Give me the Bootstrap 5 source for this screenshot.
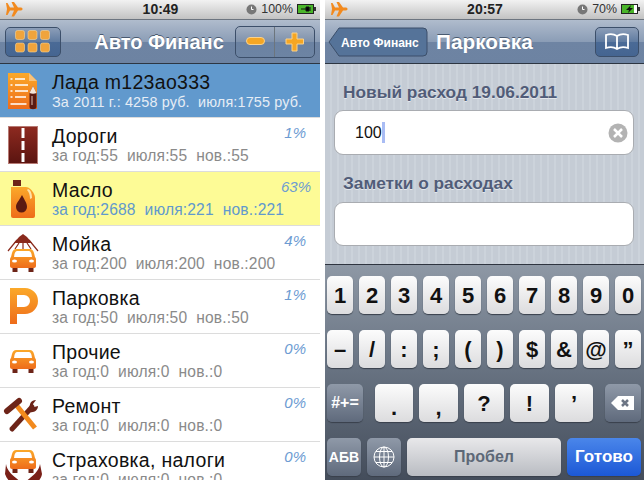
<!DOCTYPE html>
<html lang="ru">
<head>
<meta charset="UTF-8">
<title>Авто Финанс</title>
<link href="https://cdn.jsdelivr.net/npm/bootstrap@5.3.3/dist/css/bootstrap.min.css" rel="stylesheet">
<style>
  html, body { margin: 0; width: 644px; height: 480px; overflow: hidden; background: #fff; }
  body { font-family: "Liberation Sans", Arial, sans-serif; }
  .shots { width: 644px; height: 480px; }
  .phone { height: 480px; overflow: hidden; }
  .phone-left { width: 320px; margin-right: 5px; }
  .phone-right { width: 319px; background: repeating-linear-gradient(90deg, #c5ccd5 0, #c5ccd5 5px, #ccd3db 5px, #ccd3db 7px); }
  .statusbar { height: 20px; background: linear-gradient(#f2f2f2, #c2c2c2); border-bottom: 1px solid #6d7580; color: #222; padding: 0 4px 0 5px; }
  .sb-side { width: 100px; }
  .sb-time { font-weight: 700; font-size: 14px; }
  .sb-right { font-size: 12.4px; color: #333; }
  .navtop { height: 44px; background: linear-gradient(#b0bccd 0, #8b9db6 50%, #6e84a3 51%, #6d83a2 100%); border-bottom: 1px solid #2d3642; padding: 0 5px; }
  .nav-title { color: #fff; font-weight: 700; font-size: 20px; text-shadow: 0 -1px 0 #4a5a70; }
  .nav-title-main { margin-left: 22px; }
  .nav-title-sub { font-size: 20.8px; }
  .barbtn { background: linear-gradient(#8c9eb8, #5f7ba0 50%, #4a6a96 51%, #456591); border: 1px solid #3c4f6a; border-radius: 5px; height: 30px; }
  .barbtn-flat { background: linear-gradient(#a1aec1, #7e91ab 50%, #6b82a2 51%, #6d84a3); }
  .row-item { height: 54px; border-bottom: 1px solid #dcdcdc; padding-left: 8px; background: #fff; }
  .row-sel { background: #6199cd; }
  .row-hot { background: #fdfb96; }
  .row-ico { width: 30px; height: 38px; flex: none; margin-right: 14px; overflow: visible; }
  .row-name { font-size: 19.5px; line-height: 20px; color: #111; letter-spacing: .3px; margin-top: 1px; }
  .row-sub { font-size: 15.6px; line-height: 16px; color: #8a8a8a; margin-top: 2px; white-space: pre; letter-spacing: .15px; }
  .row-sel .row-sub { color: #e6edf5; font-size: 14.4px; }
  .row-hot .row-sub { color: #6199cd; }
  .row-pct { position: absolute; right: 14px; top: 5px; line-height: 20px; font-style: italic; font-size: 15px; color: #6c9bd2; }
  .row-hot .row-pct { right: 9px; }
  .fld-label { font-weight: 700; font-size: 17.3px; color: #515c78; text-shadow: 0 1px 0 #e3e7ec; padding-left: 18px; line-height: 18px; }
  .fld-box { background: #fff; border: 1px solid #a9acb1; border-radius: 9px; margin: 0 10px 0 9px; position: relative; }
  .fld-value { font-size: 16px; color: #111; }
  .fld-clear { position: absolute; right: 5px; top: 12px; }
  .caret-bar { display: inline-block; width: 3px; height: 21px; background: #a9bcf4; }
  .kbd-wrap { height: 216px; margin-top: 18px; background: linear-gradient(#8e98a5, #6a7584 45%, #444d5b); border-top: 1px solid #2f3540; padding: 11px 0 0 2px; }
  .key { width: 26px; height: 38px; margin-right: 6px; background: linear-gradient(#fcfcfc, #dcdcde); border-radius: 5px; box-shadow: 0 1px 1px #39404b; font-weight: 700; font-size: 22px; color: #111; flex: none; }
  .key-dark { background: linear-gradient(#8f99a8, #5f6a7c); color: #fff; font-size: 14px; }
  .key-sym { font-size: 16px; }
  .key-low { padding-top: 8px; }
  .key-space { background: linear-gradient(#e8e8ea, #b9bcc2); color: #5d6877; font-size: 16px; }
  .key-go { background: linear-gradient(#4a86ea, #1c58d6); color: #fff; font-size: 17px; }
  .kb-row { height: 54px; }
</style>
</head>
<body>
<svg width="0" height="0" class="position-absolute">
  <defs>
    <linearGradient id="org" x1="0" y1="0" x2="0" y2="1"><stop offset="0" stop-color="#fba92a"/><stop offset="1" stop-color="#ee6c1a"/></linearGradient>
    <linearGradient id="rd" x1="0" y1="0" x2="0" y2="1"><stop offset="0" stop-color="#8e2a20"/><stop offset="1" stop-color="#5a1410"/></linearGradient>
    <symbol id="car" viewBox="0 0 26 23" overflow="visible">
      <rect x="2.500" y="18" width="5" height="5" fill="#6d2418"/><rect x="18.500" y="18" width="5" height="5" fill="#6d2418"/>
      <path d="M6 0h14c2 0 3 1 4 4l1 4c1 1 1 2 1 3v6c0 1-1 2-2 2H2c-1 0-2-1-2-2v-6c0-1 0-2 1-3l1-4c1-3 2-4 4-4z" fill="url(#org)"/>
      <path d="M7 2h12c1 0 2 1 2.500 3l.5 3H4l.5-3C5 3 6 2 7 2z" fill="#fff"/>
      <ellipse cx="4.500" cy="12" rx="2.500" ry="1.500" fill="#fff"/><ellipse cx="21.500" cy="12" rx="2.500" ry="1.500" fill="#fff"/>
    </symbol>
  </defs>
</svg>
<div class="shots d-flex">
  <!-- left phone: list of categories -->
  <div class="phone phone-left">
    <div class="statusbar d-flex align-items-center justify-content-between">
      <div class="sb-side">
        <svg class="d-block" width="18" height="15" viewBox="0 0 18 15"><path d="M1 1h1.500l2.500 4.500h4L6.500 0h2.500l4 5.500h3c2 0 2 3 0 3h-3l-4 6H6.500L9 8.500H5l-2.500 4.500H1l1-6z" fill="#f28a1e"/></svg>
      </div>
      <span class="sb-time">10:49</span>
      <span class="sb-side sb-right d-flex align-items-center justify-content-end gap-1">
        <svg width="11" height="11" viewBox="0 0 11 11"><circle cx="5.500" cy="5.500" r="5" fill="#777"/><path d="M5.500 2.500v3h2" stroke="#fff" fill="none"/></svg>
        100%
        <svg width="19" height="10" viewBox="0 0 19 10"><rect x=".5" y=".5" width="16" height="9" fill="#4ab52a" stroke="#222"/><rect x="17" y="3" width="2" height="4" fill="#333"/><path d="M4 5h5M9 3h3v4H9zM12 4h2M12 6h2" stroke="#111"/></svg>
      </span>
    </div>
    <div class="navtop d-flex align-items-center justify-content-between">
      <div class="barbtn d-flex align-items-center justify-content-center" style="width:56px">
        <svg width="36" height="23" viewBox="0 0 36 23"><g fill="#f0a43c" stroke="#f9d79a" stroke-width=".6"><rect x=".5" y=".5" width="9" height="9" rx="2"/><rect x="13" y=".5" width="9" height="9" rx="2"/><rect x="25.500" y=".5" width="9" height="9" rx="2"/><rect x=".5" y="13" width="9" height="9" rx="2"/><rect x="13" y="13" width="9" height="9" rx="2"/><rect x="25.500" y="13" width="9" height="9" rx="2"/></g></svg>
      </div>
      <span class="nav-title nav-title-main">Авто Финанс</span>
      <div class="barbtn barbtn-flat d-flex" style="width:80px;height:32px">
        <div class="flex-fill d-flex align-items-center justify-content-center border-end border-secondary">
          <svg width="19" height="9" viewBox="0 0 19 9"><rect x=".5" y=".5" width="18" height="7" rx="3.500" fill="#f5a623" stroke="#fbd28a"/></svg>
        </div>
        <div class="flex-fill d-flex align-items-center justify-content-center">
          <svg width="20" height="20" viewBox="0 0 20 20"><path d="M7 1h5v6h6.500v5H12v7H7v-7H1V7h6z" fill="#f5a623" stroke="#fbd28a" stroke-linejoin="round"/></svg>
        </div>
      </div>
    </div>

    <div class="row-item row-sel d-flex align-items-center position-relative">
      <svg class="row-ico" viewBox="0 0 30 38"><path d="M0 1h21l8 8v28H0z" fill="url(#org)"/><path d="M21 1l8 8h-8z" fill="#f9c27a"/><g stroke="#fff" stroke-width="1.500"><path d="M2.500 7h2M7 7h10M2.500 13h2M7 13h13M2.500 19h2M7 19h13M2.500 25h2M7 25h11M2.500 32h16"/></g><path d="M21.500 21l3.500-7 3.500 7v14c0 3-7 3-7 0z" fill="#5a1a12"/><path d="M21.500 21l3.500-7 3.500 7c-2 1-5 1-7 0z" fill="#f6e6d8"/><path d="M24 24v9" stroke="#b58a7e" stroke-width="1.500"/></svg>
      <div><div class="row-name">Лада m123ao333</div><div class="row-sub">За 2011 г.: 4258 руб.  июля:1755 руб.</div></div>
    </div>
    <div class="row-item d-flex align-items-center position-relative">
      <svg class="row-ico" viewBox="0 0 30 38"><rect x=".5" y=".5" width="29" height="37" fill="url(#rd)" stroke="#b77a74"/><path d="M15 2v10M15 15v9M15 27v9" stroke="#fff" stroke-width="3"/></svg>
      <div><div class="row-name">Дороги</div><div class="row-sub">за год:55  июля:55  нов.:55</div></div>
      <span class="row-pct">1%</span>
    </div>
    <div class="row-item row-hot d-flex align-items-center position-relative">
      <svg class="row-ico" viewBox="0 0 30 38"><rect x="5" y="0" width="8" height="6" fill="#6d2418"/><path d="M3 7h15c3 0 6 3 8 7 1 2 1 3 1 5v17a2 2 0 0 1-2 2H5a2 2 0 0 1-2-2z" fill="url(#org)"/><path d="M14 15c3 6 5 8 5 12a5.500 5.500 0 0 1-11 0c0-4 3-6 6-12z" fill="#5a1a12"/><path d="M20 9c3 1 4 5 4 9l-2 1c0-4-1-7-3-9z" fill="#fde2a8"/></svg>
      <div><div class="row-name">Масло</div><div class="row-sub">за год:2688  июля:221  нов.:221</div></div>
      <span class="row-pct">63%</span>
    </div>
    <div class="row-item d-flex align-items-center position-relative">
      <svg class="row-ico" viewBox="0 0 30 38"><path d="M15 0l4 3 5 6H6l5-6z" fill="#8a2a1c"/><g stroke="#8a2a1c" stroke-width="1.200"><path d="M9 6L0 17M11 9l-4 6M15 9v6M19 9l4 6M21 6l9 11"/></g><svg x="2" y="15" width="26" height="23" viewBox="0 0 26 23"><use href="#car"/></svg></svg>
      <div><div class="row-name">Мойка</div><div class="row-sub">за год:200  июля:200  нов.:200</div></div>
      <span class="row-pct">4%</span>
    </div>
    <div class="row-item d-flex align-items-center position-relative">
      <svg class="row-ico" viewBox="0 0 30 38"><path d="M2 0H17a13 13 0 0 1 0 26H9v10H2zM9 7v12h7a6 6 0 0 0 0-12z" fill="url(#org)" fill-rule="evenodd"/></svg>
      <div><div class="row-name">Парковка</div><div class="row-sub">за год:50  июля:50  нов.:50</div></div>
      <span class="row-pct">1%</span>
    </div>
    <div class="row-item d-flex align-items-center position-relative">
      <svg class="row-ico" viewBox="0 0 30 38"><svg x="2" y="8" width="26" height="23" viewBox="0 0 26 23"><use href="#car"/></svg></svg>
      <div><div class="row-name">Прочие</div><div class="row-sub">за год:0  июля:0  нов.:0</div></div>
      <span class="row-pct">0%</span>
    </div>
    <div class="row-item d-flex align-items-center position-relative">
      <svg class="row-ico" viewBox="0 0 30 38"><path d="M4 33L24 11" stroke="#6d2418" stroke-width="5" stroke-linecap="round"/><path d="M22 12c-1-4 1-8 6-8l-3 4 1 3 4-1c0 4-4 7-8 6z" fill="#6d2418"/><path d="M9 10l18 22" stroke="#f28a1e" stroke-width="5"/><path d="M-1 15L11 5" stroke="#6d2418" stroke-width="6" stroke-linecap="round"/></svg>
      <div><div class="row-name">Ремонт</div><div class="row-sub">за год:0  июля:0  нов.:0</div></div>
      <span class="row-pct">0%</span>
    </div>
    <div class="row-item d-flex align-items-center position-relative">
      <svg class="row-ico" viewBox="0 0 30 38"><svg x="2" y="0" width="26" height="23" viewBox="0 0 26 23"><use href="#car"/></svg><path d="M-2 14c1 6 5 10 10 14l7 6 7-6c5-4 9-8 10-14l2 10c-1 6-6 10-11 14H9C4 34-1 30-3 24z" fill="#7a2018"/></svg>
      <div><div class="row-name">Страховка, налоги</div><div class="row-sub">за год:0  июля:0  нов.:0</div></div>
      <span class="row-pct">0%</span>
    </div>
  </div>

  <!-- right phone: new expense -->
  <div class="phone phone-right">
    <div class="statusbar d-flex align-items-center justify-content-between">
      <div class="sb-side">
        <svg class="d-block" width="18" height="15" viewBox="0 0 18 15"><path d="M1 1h1.500l2.500 4.500h4L6.500 0h2.500l4 5.500h3c2 0 2 3 0 3h-3l-4 6H6.500L9 8.500H5l-2.500 4.500H1l1-6z" fill="#f28a1e"/></svg>
      </div>
      <span class="sb-time">20:57</span>
      <span class="sb-side sb-right d-flex align-items-center justify-content-end gap-1">
        <svg width="11" height="11" viewBox="0 0 11 11"><circle cx="5.500" cy="5.500" r="5" fill="#777"/><path d="M5.500 2.500v3h2" stroke="#fff" fill="none"/></svg>
        70%
        <svg width="19" height="10" viewBox="0 0 19 10"><rect x=".5" y=".5" width="16" height="9" fill="#fff" stroke="#222"/><rect x="1" y="1" width="12" height="8" fill="#4ab52a"/><rect x="17" y="3" width="2" height="4" fill="#333"/><path d="M10 1L5 6h3L7 9l5-5H9z" fill="#111"/></svg>
      </span>
    </div>
    <div class="navtop d-flex align-items-center justify-content-between" style="padding-left:3px">
      <div class="d-flex align-items-center gap-2">
        <svg width="100" height="30" viewBox="0 0 100 30"><path d="M1 15L11 1h84a4 4 0 0 1 4 4v20a4 4 0 0 1-4 4H11z" fill="#557399" stroke="#3c4f6a"/><text x="13" y="20" font-family="Liberation Sans" font-size="12" font-weight="700" fill="#fff">Авто Финанс</text></svg>
        <span class="nav-title nav-title-sub">Парковка</span>
      </div>
      <div class="barbtn d-flex align-items-center justify-content-center" style="width:44px">
        <svg width="26" height="18" viewBox="0 0 26 18"><path d="M13 3C10 1 5 1 2 2v13c3-1 8-1 11 1 3-2 8-2 11-1V2c-3-1-8-1-11 1zM13 3v13" fill="none" stroke="#fff" stroke-width="1.800"/></svg>
      </div>
    </div>
    <div class="fld-label" style="margin-top:19px">Новый расход 19.06.2011</div>
    <div class="fld-box d-flex align-items-center" style="height:45px;margin-top:9px;padding-left:20px">
      <span class="fld-value">100</span><span class="caret-bar"></span>
      <svg class="fld-clear" width="20" height="20" viewBox="0 0 20 20"><circle cx="10" cy="10" r="9.500" fill="#b3b3b3"/><path d="M6 6l8 8M14 6l-8 8" stroke="#fff" stroke-width="2.500"/></svg>
    </div>
    <div class="fld-label" style="margin-top:19px">Заметки о расходах</div>
    <div class="fld-box" style="height:44px;margin-top:10px"></div>

    <div class="kbd-wrap">
      <div class="kb-row d-flex">
        <div class="key d-flex align-items-center justify-content-center">1</div><div class="key d-flex align-items-center justify-content-center">2</div><div class="key d-flex align-items-center justify-content-center">3</div><div class="key d-flex align-items-center justify-content-center">4</div><div class="key d-flex align-items-center justify-content-center">5</div><div class="key d-flex align-items-center justify-content-center">6</div><div class="key d-flex align-items-center justify-content-center">7</div><div class="key d-flex align-items-center justify-content-center">8</div><div class="key d-flex align-items-center justify-content-center">9</div><div class="key d-flex align-items-center justify-content-center">0</div>
      </div>
      <div class="kb-row d-flex">
        <div class="key d-flex align-items-center justify-content-center">–</div><div class="key d-flex align-items-center justify-content-center">/</div><div class="key d-flex align-items-center justify-content-center">:</div><div class="key d-flex align-items-center justify-content-center">;</div><div class="key d-flex align-items-center justify-content-center">(</div><div class="key d-flex align-items-center justify-content-center">)</div><div class="key d-flex align-items-center justify-content-center">$</div><div class="key d-flex align-items-center justify-content-center">&amp;</div><div class="key d-flex align-items-center justify-content-center">@</div><div class="key d-flex align-items-center justify-content-center">”</div>
      </div>
      <div class="kb-row d-flex">
        <div class="key key-dark key-sym d-flex align-items-center justify-content-center" style="width:36px;margin-right:12px">#+=</div>
        <div class="key key-low d-flex align-items-center justify-content-center" style="width:38px">.</div><div class="key key-low d-flex align-items-center justify-content-center" style="width:39px">,</div><div class="key d-flex align-items-center justify-content-center" style="width:40px">?</div><div class="key d-flex align-items-center justify-content-center" style="width:39px">!</div><div class="key d-flex align-items-center justify-content-center" style="width:38px;margin-right:12px">’</div>
        <div class="key key-dark d-flex align-items-center justify-content-center" style="width:36px;margin-right:0">
          <svg width="24" height="16" viewBox="0 0 24 16"><path d="M7 1h16v14H7L0 8z" fill="#fff"/><path d="M11 5l6 6M17 5l-6 6" stroke="#6d7685" stroke-width="2.500"/></svg>
        </div>
      </div>
      <div class="kb-row d-flex">
        <div class="key key-dark d-flex align-items-center justify-content-center" style="width:34px">АБВ</div>
        <div class="key key-dark d-flex align-items-center justify-content-center" style="width:34px">
          <svg width="22" height="22" viewBox="0 0 22 22" fill="none" stroke="#fff"><circle cx="11" cy="11" r="10"/><ellipse cx="11" cy="11" rx="4.500" ry="10"/><path d="M1 11h20M3 5.500h16M3 16.500h16M11 1v20"/></svg>
        </div>
        <div class="key key-space d-flex align-items-center justify-content-center" style="width:154px">Пробел</div>
        <div class="key key-go d-flex align-items-center justify-content-center" style="width:74px;margin-right:0">Готово</div>
      </div>
    </div>
  </div>
</div>
</body>
</html>
